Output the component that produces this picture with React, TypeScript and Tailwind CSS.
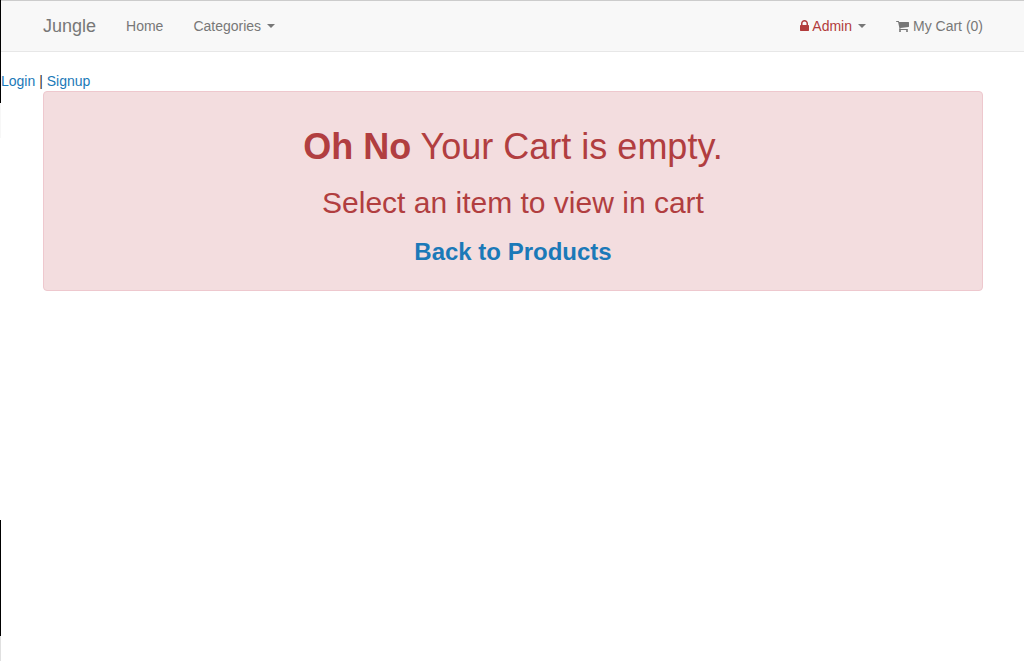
import React from "react";

function Caret() {
  return (
    <span
      aria-hidden="true"
      className="h-0 w-0 border-x-4 border-t-4 border-x-transparent border-t-[#777777]"
    />
  );
}

function LockIcon() {
  return (
    <svg aria-hidden="true" viewBox="320 0 1152 1792" className="h-3.5 w-[9px] fill-current">
      <path d="M640 768h512v-192q0-106-75-181t-181-75-181 75-75 181v192zm832 96v576q0 40-28 68t-68 28h-960q-40 0-68-28t-28-68v-576q0-40 28-68t68-28h32v-192q0-184 132-316t316-132 316 132 132 316v192h32q40 0 68 28t28 68z" />
    </svg>
  );
}

function CartIcon() {
  return (
    <svg aria-hidden="true" viewBox="64 0 1664 1792" className="h-3.5 w-[13px] fill-current">
      <path d="M704 1536q0 52-38 90t-90 38-90-38-38-90 38-90 90-38 90 38 38 90zm896 0q0 52-38 90t-90 38-90-38-38-90 38-90 90-38 90 38 38 90zm128-1088v512q0 24-16.5 42.5t-40.5 21.5l-1044 122q13 60 13 70 0 16-24 64h920q26 0 45 19t19 45-19 45-45 19h-1024q-26 0-45-19t-19-45q0-11 8-31.5t16-36 21.5-40 15.5-29.5l-177-823h-204q-26 0-45-19t-19-45 19-45 45-19h256q16 0 28.5 6.5t19.5 15.5 13 24.5 8 26 5.5 29.5 4.5 26h1201q26 0 45 19t19 45z" />
    </svg>
  );
}

function EdgeStrip() {
  return (
    <div aria-hidden="true" className="flex w-px shrink-0 flex-col">
      <div className="h-[103px] bg-black" />
      <div className="h-[35px] bg-[#f7f7f7]" />
      <div className="grow" />
      <div className="h-[116px] bg-black" />
      <div className="h-[25px] bg-[#e0e0e0]" />
    </div>
  );
}

function Navbar() {
  return (
    <nav className="border-t border-b border-t-[#cccccc] border-b-[#e7e7e7] bg-[#f8f8f8] pl-px text-[#777777]">
      <div className="mx-auto flex max-w-[970px] items-center justify-between">
        <div className="flex items-center">
          <a href="#" className="p-[15px] text-lg leading-5">Jungle</a>
          <a href="#" className="p-[15px]">Home</a>
          <button type="button" className="flex items-center gap-1.5 p-[15px]">
            Categories
            <Caret />
          </button>
        </div>
        <div className="flex items-center">
          <button type="button" className="flex items-center gap-1.5 p-[15px]">
            <span className="flex items-center gap-[3px] text-[#b23c3c]">
              <LockIcon />
              Admin
            </span>
            <Caret />
          </button>
          <a href="#" className="flex items-center gap-1 p-[15px]">
            <CartIcon />
            My Cart (0)
          </a>
        </div>
      </div>
    </nav>
  );
}

export default function App() {
  return (
    <div className="flex min-h-screen bg-white font-['Liberation_Sans',Arial,sans-serif] text-sm leading-5 text-[#333333]">
      <EdgeStrip />
      <div className="min-w-0 grow">
        <Navbar />
        <div className="pt-[19px]">
          <a href="#" className="text-[#1b79b8]">Login</a>
          {" | "}
          <a href="#" className="text-[#1b79b8]">Signup</a>
        </div>
        <main className="pl-px">
          <div className="mx-auto max-w-[970px] px-[15px]">
            <section
              role="alert"
              className="flex flex-col gap-5 rounded-sm border border-[#eec8ce] bg-[#f3dddf] px-[15px] pt-[35px] pb-[25px] text-center text-[#b13e40]"
            >
              <h1 className="text-4xl leading-[39px]">
                <strong>Oh No</strong> Your Cart is empty.
              </h1>
              <h2 className="text-3xl leading-[33px]">Select an item to view in cart</h2>
              <h3 className="text-2xl leading-[26px] font-bold">
                <a href="#" className="text-[#1b79b8]">Back to Products</a>
              </h3>
            </section>
          </div>
        </main>
      </div>
    </div>
  );
}
